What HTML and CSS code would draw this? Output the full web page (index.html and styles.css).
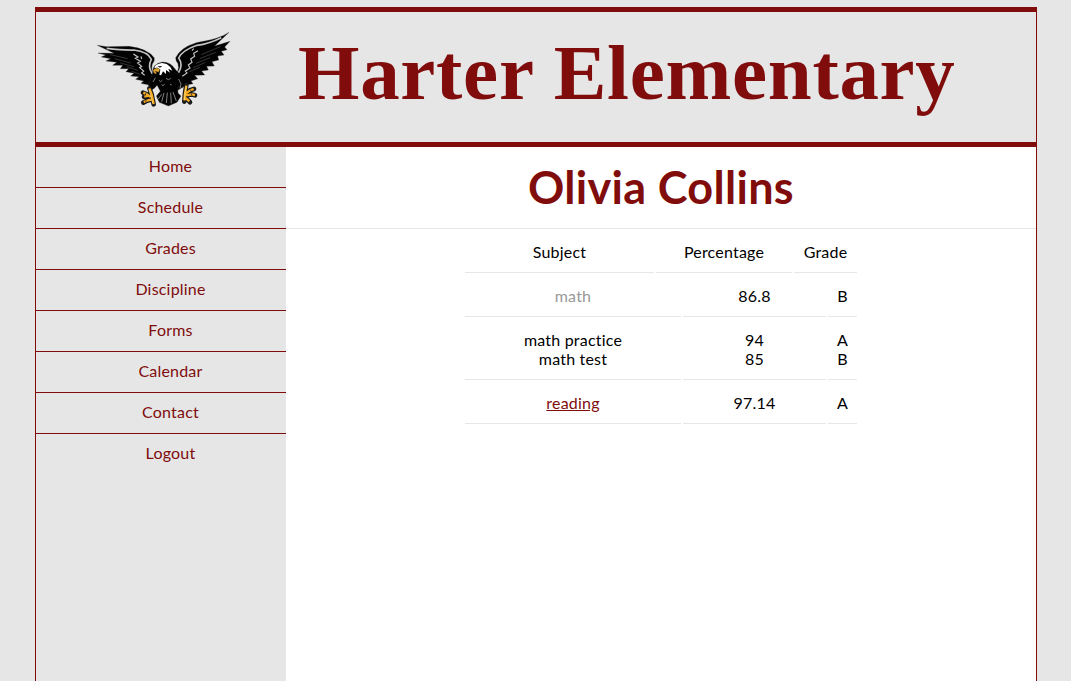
FILE: index.html
```html
<!DOCTYPE html>
<html lang="en">
<head>
<meta charset="utf-8">
<title>Harter Elementary</title>
<link rel="stylesheet" href="styles.css">
</head>
<body>
<div class="page">
  <header class="banner">
    <svg class="logo" viewBox="0 0 450 270" aria-label="Eagle">
      <path class="feather" d="M22 61L50 65L117 64Q172 70 193 99Q195 107 187 117Q183 132 188 142L206 175L192 191L181 181L153 175L161 168L137 163L147 155L122 153L132 145L108 140L116 131L91 131L98 121L68 121L80 112L48 108L62 101L34 96L47 90L24 84L72 85Z"/>
      <path class="feather" d="M417 22Q390 42 319 53Q271 68 257 98Q257 108 264 116Q268 128 262 142L246 174L263 196L289 180L309 176L303 168L323 161L314 151L344 150L335 138L355 135L350 124L373 123L366 110L386 105L383 93L402 90L394 79L411 74L404 66L420 49L374 63Z"/>
      <path class="trim" d="M50 70Q97 76 132 75Q174 80 184 103Q172 125 187 146M394 38Q357 56 321 61Q277 76 266 99Q281 119 265 144"/>
      <path class="detail" d="M130 87L144 96L136 100L151 109L143 114L155 124L149 128L161 138L155 144L164 151M153 94L155 102M324 77L311 85L314 94L302 102L306 112L295 120L300 129L286 138L291 144L277 154M306 77L311 71"/>
      <path class="detail fine" d="M61 89L113 101M74 101L122 114M91 114L132 125M110 125L143 136M125 139L151 148M391 65L334 89M377 82L329 101M361 98L318 115M346 112L309 129M330 127L298 140"/>
      <path class="feather" d="M188 145Q186 116 218 111Q243 112 257 134L276 155L279 187L263 184L264 204L273 213L261 232L235 243L208 232L199 213L211 199L201 180L186 195L175 181Z"/>
      <path class="detail body" d="M196 158L189 171M266 162L273 177L270 190M207 166L212 170L217 166M228 160L235 164L242 160M215 179L219 182L224 178M240 178L245 180M215 208L205 222M222 204L215 230M232 203L229 234M242 203L244 235M249 201L259 228"/>
      <path class="head" d="M193 130Q194 117 216 114L230 117L241 126L247 137L235 131L240 143L228 135L228 147L219 139L213 151L208 149L211 134L201 128Z"/>
      <path class="beak" d="M189 134L201 128L210 134L206 142L196 139L201 145L195 147L190 141Z"/>
      <path class="eye" d="M202 124L217 123L210 128Z"/>
      <path class="claw" d="M178 190L185 208L191 238M182 216L171 208L159 203M184 224L171 227L160 233M176 212L162 215M289 180L285 205L283 230M287 206L300 196L312 192M288 211L304 208L315 211M286 219L294 225L300 232"/>
      <path class="talon" d="M178 190L185 208L191 237M182 216L171 208L160 203M184 224L171 227L161 231M176 212L163 215M289 182L285 205L283 226M287 206L300 196L311 192M288 211L304 208L315 210M286 219L294 225L298 229"/>
      <path class="shine" d="M177 194L181 207L188 235M289 184L285 205L283 226"/>
      <path class="knuckle" d="M168 204L165 212M169 222L167 231M300 193L305 200M303 205L306 212"/>
    </svg>
    <h1 class="school">Harter Elementary</h1>
  </header>
  <div class="columns">
    <nav class="menu">
      <a>Home</a><a>Schedule</a><a>Grades</a><a>Discipline</a><a>Forms</a><a>Calendar</a><a>Contact</a><a>Logout</a>
    </nav>
    <main class="content">
      <h2 class="student">Olivia Collins</h2>
      <div class="grades">
        <div class="row titles"><span>Subject</span><span>Percentage</span><span>Grade</span></div>
        <div class="row"><span class="muted">math</span><span>86.8</span><span>B</span></div>
        <div class="row"><span>math practice<br>math test</span><span>94<br>85</span><span>A<br>B</span></div>
        <div class="row"><span><a class="link">reading</a></span><span>97.14</span><span>A</span></div>
      </div>
    </main>
  </div>
</div>
</body>
</html>
```
FILE: styles.css
```css
* { box-sizing: border-box; }
body {
  margin: 0;
  padding-top: 7px;
  background: #e6e6e6;
  color: #000;
  font: 16px/19px "Trebuchet MS", Lato, sans-serif;
  letter-spacing: 0.2px;
  font-variant-ligatures: none;
}
.page {
  width: 1002px;
  height: 674px;
  margin-left: 35px;
  border: solid #800c0c;
  border-width: 0 1px;
  display: flex;
  flex-direction: column;
  overflow: hidden;
}
.banner {
  height: 140px;
  flex: none;
  display: flex;
  border: solid #800c0c;
  border-width: 5px 0;
}
.logo { width: 150px; height: 90px; margin: 13px 0 0 54px; }
.school {
  margin: 15px 0 0 58px;
  font: bold 79px/92px "Liberation Serif", serif;
  letter-spacing: 0.7px;
  color: #800c0c;
  white-space: nowrap;
}
.feather { fill: #020202; stroke: #333; stroke-width: 1; }
.trim { fill: none; stroke: #c4c4c4; stroke-width: 5; }
.detail { fill: none; stroke: #c4c4c4; stroke-width: 3.5; }
.fine { stroke: #666; stroke-width: 1.5; }
.body { stroke: #999; stroke-width: 2.5; }
.head { fill: #fff; }
.beak { fill: #dda52d; stroke: #222; stroke-width: 1; }
.eye { fill: #111; }
.claw { fill: none; stroke: #1a1a1a; stroke-width: 14; stroke-linejoin: round; stroke-linecap: round; }
.talon { fill: none; stroke: #f7ac20; stroke-width: 7; stroke-linejoin: round; }
.shine { fill: none; stroke: #ffe6a2; stroke-width: 2; }
.knuckle { fill: none; stroke: #2a2a2a; stroke-width: 2.5; }
.columns { display: flex; flex: 1; }
.menu { width: 250px; color: #800c0c; text-align: center; }
.menu a {
  display: block;
  height: 41px;
  padding: 9px 0 0 19px;
  border-bottom: 1px solid #800c0c;
}
.menu a:last-child { border-bottom: 0; }
.content { width: 750px; background: #fff; }
.student {
  height: 82px;
  margin: 0;
  padding-top: 14px;
  border-bottom: 1px solid #e6e6e6;
  font-size: 45px;
  line-height: 52px;
  letter-spacing: 0.3px;
  font-weight: bold;
  color: #800c0c;
  text-align: center;
}
.grades { width: 392px; margin-left: 179px; text-align: center; }
.row { display: grid; grid-template-columns: 216px 143px 29px; column-gap: 2px; }
.titles { grid-template-columns: 189px 136px 63px; }
.row > span { padding: 13px 0 11px; border-bottom: 1px solid #e6e6e6; }
.muted { color: #999; }
.link { color: #800c0c; text-decoration: underline; }
```
